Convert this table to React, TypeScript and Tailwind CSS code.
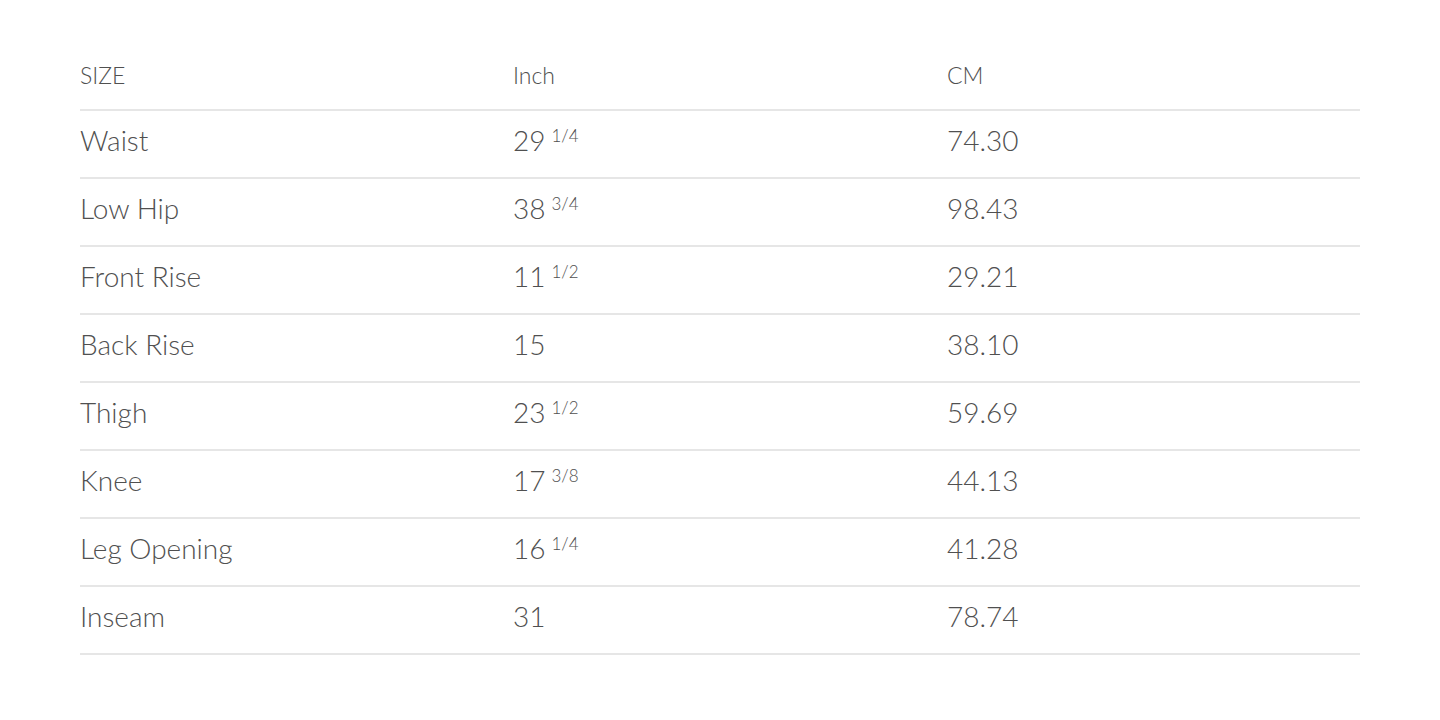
const rows = [
  { name: 'Waist', inch: '29', frac: '1/4', cm: '74.30' },
  { name: 'Low Hip', inch: '38', frac: '3/4', cm: '98.43' },
  { name: 'Front Rise', inch: '11', frac: '1/2', cm: '29.21' },
  { name: 'Back Rise', inch: '15', frac: '', cm: '38.10' },
  { name: 'Thigh', inch: '23', frac: '1/2', cm: '59.69' },
  { name: 'Knee', inch: '17', frac: '3/8', cm: '44.13' },
  { name: 'Leg Opening', inch: '16', frac: '1/4', cm: '41.28' },
  { name: 'Inseam', inch: '31', frac: '', cm: '78.74' },
]

export default function App() {
  return (
    <div className="min-h-[720px] bg-white px-20 pt-[43px] font-['Lato','Liberation_Sans',sans-serif] font-light text-[#505050]">
      <div className="grid h-[68px] grid-cols-[433px_434px_1fr] items-center border-b-2 border-[#e6e6e6] pb-0.5 text-[23px]">
        <span>SIZE</span>
        <span>Inch</span>
        <span>CM</span>
      </div>
      {rows.map((row) => (
        <div
          key={row.name}
          className="grid h-[68px] grid-cols-[433px_434px_1fr] items-center border-b-2 border-[#e6e6e6] pb-2 text-[28px]"
        >
          <span>{row.name}</span>
          <span className="flex items-start">
            {row.inch}
            {row.frac && <span className="ml-1.5 mt-[4px] text-[17px]">{row.frac}</span>}
          </span>
          <span>{row.cm}</span>
        </div>
      ))}
    </div>
  )
}
